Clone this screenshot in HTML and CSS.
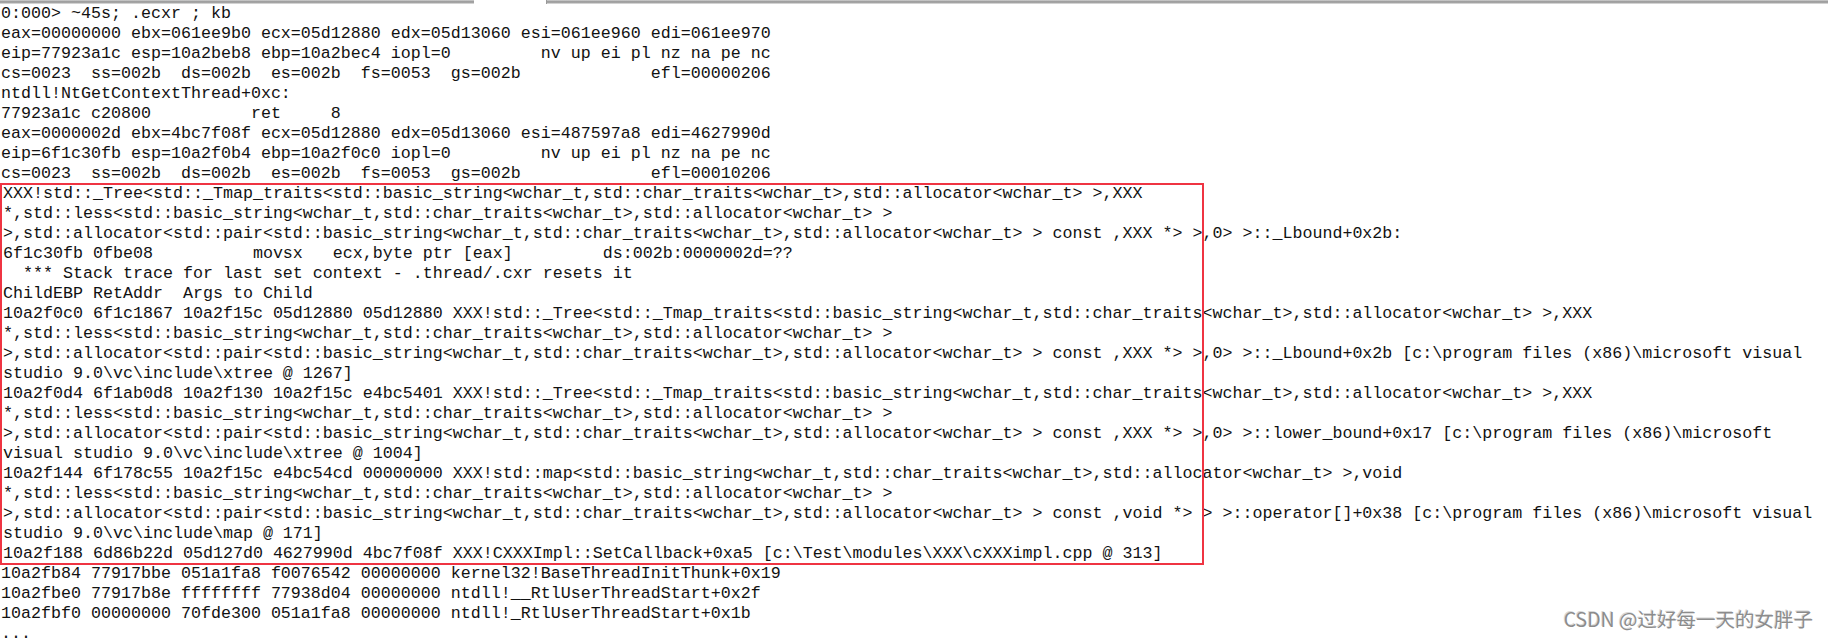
FILE: index.html
```html
<!DOCTYPE html>
<html>
<head>
<meta charset="utf-8">
<link rel="stylesheet" href="styles.css">
</head>
<body>
<div class="topbar"><div class="seg seg-a"></div><div class="gap"></div><div class="tick"></div><div class="seg seg-b"></div></div>
<div class="console">
<div class="ln">0:000&gt; ~45s; .ecxr ; kb</div>
<div class="ln">eax=00000000 ebx=061ee9b0 ecx=05d12880 edx=05d13060 esi=061ee960 edi=061ee970</div>
<div class="ln">eip=77923a1c esp=10a2beb8 ebp=10a2bec4 iopl=0         nv up ei pl nz na pe nc</div>
<div class="ln">cs=0023  ss=002b  ds=002b  es=002b  fs=0053  gs=002b             efl=00000206</div>
<div class="ln">ntdll!NtGetContextThread+0xc:</div>
<div class="ln">77923a1c c20800          ret     8</div>
<div class="ln">eax=0000002d ebx=4bc7f08f ecx=05d12880 edx=05d13060 esi=487597a8 edi=4627990d</div>
<div class="ln">eip=6f1c30fb esp=10a2f0b4 ebp=10a2f0c0 iopl=0         nv up ei pl nz na pe nc</div>
<div class="ln">cs=0023  ss=002b  ds=002b  es=002b  fs=0053  gs=002b             efl=00010206</div>
<div class="boxed">
<div class="ln">XXX!std::_Tree&lt;std::_Tmap_traits&lt;std::basic_string&lt;wchar_t,std::char_traits&lt;wchar_t&gt;,std::allocator&lt;wchar_t&gt; &gt;,XXX</div>
<div class="ln">*,std::less&lt;std::basic_string&lt;wchar_t,std::char_traits&lt;wchar_t&gt;,std::allocator&lt;wchar_t&gt; &gt;</div>
<div class="ln">&gt;,std::allocator&lt;std::pair&lt;std::basic_string&lt;wchar_t,std::char_traits&lt;wchar_t&gt;,std::allocator&lt;wchar_t&gt; &gt; const ,XXX *&gt; &gt;,0&gt; &gt;::_Lbound+0x2b:</div>
<div class="ln">6f1c30fb 0fbe08          movsx   ecx,byte ptr [eax]         ds:002b:0000002d=??</div>
<div class="ln">  *** Stack trace for last set context - .thread/.cxr resets it</div>
<div class="ln">ChildEBP RetAddr  Args to Child</div>
<div class="ln">10a2f0c0 6f1c1867 10a2f15c 05d12880 05d12880 XXX!std::_Tree&lt;std::_Tmap_traits&lt;std::basic_string&lt;wchar_t,std::char_traits&lt;wchar_t&gt;,std::allocator&lt;wchar_t&gt; &gt;,XXX</div>
<div class="ln">*,std::less&lt;std::basic_string&lt;wchar_t,std::char_traits&lt;wchar_t&gt;,std::allocator&lt;wchar_t&gt; &gt;</div>
<div class="ln">&gt;,std::allocator&lt;std::pair&lt;std::basic_string&lt;wchar_t,std::char_traits&lt;wchar_t&gt;,std::allocator&lt;wchar_t&gt; &gt; const ,XXX *&gt; &gt;,0&gt; &gt;::_Lbound+0x2b [c:\program files (x86)\microsoft visual</div>
<div class="ln">studio 9.0\vc\include\xtree @ 1267]</div>
<div class="ln">10a2f0d4 6f1ab0d8 10a2f130 10a2f15c e4bc5401 XXX!std::_Tree&lt;std::_Tmap_traits&lt;std::basic_string&lt;wchar_t,std::char_traits&lt;wchar_t&gt;,std::allocator&lt;wchar_t&gt; &gt;,XXX</div>
<div class="ln">*,std::less&lt;std::basic_string&lt;wchar_t,std::char_traits&lt;wchar_t&gt;,std::allocator&lt;wchar_t&gt; &gt;</div>
<div class="ln">&gt;,std::allocator&lt;std::pair&lt;std::basic_string&lt;wchar_t,std::char_traits&lt;wchar_t&gt;,std::allocator&lt;wchar_t&gt; &gt; const ,XXX *&gt; &gt;,0&gt; &gt;::lower_bound+0x17 [c:\program files (x86)\microsoft</div>
<div class="ln">visual studio 9.0\vc\include\xtree @ 1004]</div>
<div class="ln">10a2f144 6f178c55 10a2f15c e4bc54cd 00000000 XXX!std::map&lt;std::basic_string&lt;wchar_t,std::char_traits&lt;wchar_t&gt;,std::allocator&lt;wchar_t&gt; &gt;,void</div>
<div class="ln">*,std::less&lt;std::basic_string&lt;wchar_t,std::char_traits&lt;wchar_t&gt;,std::allocator&lt;wchar_t&gt; &gt;</div>
<div class="ln">&gt;,std::allocator&lt;std::pair&lt;std::basic_string&lt;wchar_t,std::char_traits&lt;wchar_t&gt;,std::allocator&lt;wchar_t&gt; &gt; const ,void *&gt; &gt; &gt;::operator[]+0x38 [c:\program files (x86)\microsoft visual</div>
<div class="ln">studio 9.0\vc\include\map @ 171]</div>
<div class="ln">10a2f188 6d86b22d 05d127d0 4627990d 4bc7f08f XXX!CXXXImpl::SetCallback+0xa5 [c:\Test\modules\XXX\cXXXimpl.cpp @ 313]</div>
</div>
<div class="ln">10a2fb84 77917bbe 051a1fa8 f0076542 00000000 kernel32!BaseThreadInitThunk+0x19</div>
<div class="ln">10a2fbe0 77917b8e ffffffff 77938d04 00000000 ntdll!__RtlUserThreadStart+0x2f</div>
<div class="ln">10a2fbf0 00000000 70fde300 051a1fa8 00000000 ntdll!_RtlUserThreadStart+0x1b</div>
<div class="ln">...</div>
</div>
<div class="watermark">CSDN @过好每一天的女胖子</div>
</body>
</html>
```
FILE: styles.css
```css
html, body {
  margin: 0;
  padding: 0;
  background: #ffffff;
}
body {
  width: 1828px;
  height: 643px;
  overflow: hidden;
  position: relative;
}
.topbar {
  display: flex;
  height: 4px;
}
.seg {
  background: linear-gradient(to bottom, #d4d4d4 0, #8f8f8f 50%, #b8b8b8 75%, #ececec 100%);
}
.seg-a {
  flex: 0 0 474px;
}
.gap {
  flex: 0 0 72px;
  background: #ffffff;
}
.tick {
  flex: 0 0 1px;
  background: #9a9a9a;
}
.seg-b {
  flex: 1 1 auto;
}
.console {
  font-family: "Liberation Mono", "Courier New", monospace;
  font-size: 16.66px;
  line-height: 20px;
  color: #121212;
}
.ln {
  white-space: pre;
  height: 20px;
  padding-left: 1px;
}
.boxed {
  position: relative;
  width: 1206px;
}
.boxed .ln {
  padding-left: 3px;
}
.boxed::after {
  content: "";
  position: absolute;
  left: 0;
  top: -1px;
  width: 1200px;
  bottom: -1px;
  border: 2px solid #ef3442;
  pointer-events: none;
}
.watermark {
  position: absolute;
  right: 15px;
  bottom: 13px;
  font-family: "Noto Sans CJK SC", "Noto Sans", sans-serif;
  font-size: 19.5px;
  line-height: 22px;
  color: #8c8c8c;
  text-shadow: 1px 1px 0 #ffffff, -1px -1px 0 #d8d8d8;
}
```
